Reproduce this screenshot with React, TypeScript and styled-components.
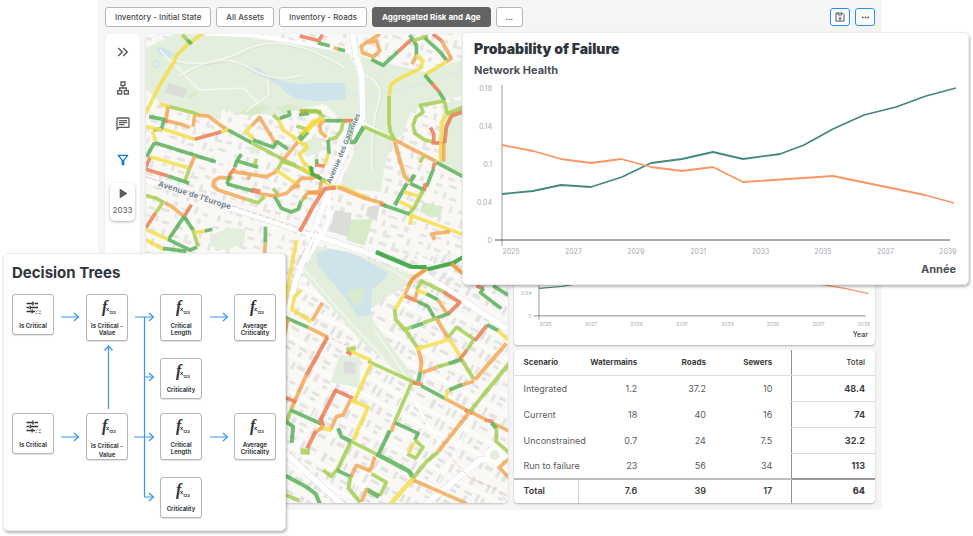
import React from "react";
import styled, { createGlobalStyle } from "styled-components";
import {
  MdKeyboardDoubleArrowRight,
  MdOutlineChat,
  MdOutlineFilterAlt,
  MdOutlineLan,
  MdPlayArrow,
  MdMoreHoriz,
} from "react-icons/md";

const GlobalStyle = createGlobalStyle`
  *, *::before, *::after { box-sizing: border-box; }
  body { margin: 0; background: #fff; font-family: Inter, "Liberation Sans", sans-serif; color: #3a3d42; }
  button { font-family: inherit; cursor: pointer; }
`;

const Stage = styled.div`
  position: relative;
  min-height: 100vh;
  overflow: hidden;
`;

const Dashboard = styled.main`
  margin: 0 91px 0 98px;
  padding: 7px;
  background: #f5f5f5;
`;

const Toolbar = styled.header`
  display: flex;
  align-items: center;
  justify-content: space-between;
  height: 20px;
  margin-bottom: 7px;
`;

const Tabs = styled.nav`
  display: flex;
  gap: 5px;
`;

const Tab = styled.button<{ $active?: boolean }>`
  height: 20px;
  padding: 0 9px;
  border: 1px solid ${(p) => (p.$active ? "#636363" : "#b5b5b5")};
  border-radius: 3px;
  background: ${(p) => (p.$active ? "#636363" : "#fff")};
  color: ${(p) => (p.$active ? "#fff" : "#4a4a4a")};
  font-size: 8px;
  font-weight: ${(p) => (p.$active ? 700 : 500)};
  line-height: 16px;
  white-space: nowrap;
`;

const Actions = styled.div`
  display: flex;
  gap: 5px;
`;

const ActionButton = styled.button`
  display: grid;
  place-items: center;
  width: 20px;
  height: 18px;
  padding: 0;
  border: 1px solid #2491fb;
  border-radius: 3px;
  background: #fff;
  color: #555;
`;

const Workspace = styled.div`
  display: grid;
  grid-template-columns: 35px minmax(0, 1fr) minmax(0, 1fr);
  gap: 6px;
`;

const Sidebar = styled.aside`
  display: flex;
  flex-direction: column;
  align-items: center;
  gap: 16px;
  padding-top: 8px;
  border-radius: 5px;
  background: #fff;
  box-shadow: 0 1px 2px rgba(0, 0, 0, 0.1);
`;

const SideButton = styled.button<{ $active?: boolean }>`
  display: grid;
  place-items: center;
  width: 24px;
  height: 20px;
  padding: 0;
  border: 0;
  background: none;
  color: ${(p) => (p.$active ? "#0b78e3" : "#5c5c5c")};
`;

const PlayButton = styled.button`
  display: flex;
  flex-direction: column;
  align-items: center;
  gap: 2px;
  width: 25px;
  height: 38px;
  margin-top: -3px;
  padding: 2px 0 0;
  border: 0;
  border-radius: 5px;
  background: #fff;
  box-shadow: 0 1px 3px rgba(0, 0, 0, 0.3);
  color: #5c5c5c;
  font-size: 8px;
  line-height: 12px;
`;

const MapFrame = styled.section`
  height: 469px;
  overflow: hidden;
  border-radius: 5px;
  box-shadow: 0 1px 2px rgba(0, 0, 0, 0.2);
`;

const MapCanvas = styled.svg`
  display: block;
  width: 100%;
  height: 100%;
`;

const MapLabel = styled.text`
  font-family: "Noto Sans", sans-serif;
  font-weight: 700;
  fill: #71838f;
  stroke: #fff;
  stroke-width: 1px;
  paint-order: stroke;
`;

const Column = styled.div`
  display: flex;
  flex-direction: column;
  justify-content: space-between;
`;

const Panel = styled.section`
  border-radius: 4px;
  background: #fff;
  box-shadow: 0 1px 2px rgba(0, 0, 0, 0.28);
`;

const ChartPanel = styled(Panel)`
  display: flex;
  flex-direction: column;
  justify-content: flex-end;
  height: 311px;
  padding-bottom: 4px;
`;

const ChartSvg = styled.svg`
  display: block;
  width: 100%;
  height: auto;
  overflow: visible;
`;

const AxisText = styled.text`
  font-family: Inter, sans-serif;
  fill: #a4a8b2;
`;

const AxisTitle = styled.div<{ $small?: boolean }>`
  padding-right: ${(p) => (p.$small ? 7 : 12)}px;
  text-align: right;
  font-size: ${(p) => (p.$small ? 7 : 11)}px;
  line-height: ${(p) => (p.$small ? 12 : 20)}px;
  font-weight: ${(p) => (p.$small ? 600 : 700)};
  color: #4b4f58;
`;

const Table = styled.table`
  width: 100%;
  table-layout: fixed;
  border-collapse: collapse;
  font-size: 9px;
  color: #5a5a5a;
`;

const Cell = styled.td<{ $total?: boolean; $sewers?: boolean }>`
  height: 26px;
  padding: 0 ${(p) => (p.$sewers ? 19 : 10)}px 0 0;
  text-align: right;
  font-weight: ${(p) => (p.$total ? 700 : 400)};
  color: ${(p) => (p.$total ? "#3c3c3c" : "#5a5a5a")};
  border-left: ${(p) => (p.$total ? "1px solid #8f8f8f" : "0")};
  border-bottom: ${(p) => (p.$total ? "1px solid #dcdcdc" : "0")};
`;

const HeadCell = styled.th<{ $first?: boolean; $sewers?: boolean; $total?: boolean }>`
  height: 25px;
  padding: ${(p) => (p.$first ? "0 0 0 10px" : p.$sewers ? "0 19px 0 0" : "0 10px 0 0")};
  text-align: ${(p) => (p.$first ? "left" : "right")};
  font-size: 8px;
  font-weight: ${(p) => (p.$total ? 500 : 700)};
  color: #3c3c3c;
  border-bottom: 1px solid #dcdcdc;
  border-left: ${(p) => (p.$total ? "1px solid #8f8f8f" : "0")};
`;

const RowHead = styled.th`
  padding: 0 0 0 10px;
  text-align: left;
  font-weight: 400;
  white-space: nowrap;
`;

const FootCell = styled.td<{ $sewers?: boolean; $total?: boolean }>`
  height: 24px;
  padding: 0 ${(p) => (p.$sewers ? 19 : 10)}px 2px 0;
  text-align: right;
  font-weight: ${(p) => (p.$total ? 800 : 600)};
  color: #3c3c3c;
  border-top: 2px solid ${(p) => (p.$total ? "#999" : "#bdbdbd")};
  border-left: ${(p) => (p.$total ? "1px solid #8f8f8f" : "0")};
`;

const FootHead = styled.th`
  padding: 0 0 2px 10px;
  text-align: left;
  font-weight: 600;
  color: #3c3c3c;
  border-top: 2px solid #bdbdbd;
  border-right: 1px solid #d0d0d0;
`;

const FloatingCard = styled.section`
  position: absolute;
  border: 1px solid #e9ebee;
  border-radius: 5px;
  background: #fff;
  box-shadow: 1px 2px 3px rgba(0, 0, 0, 0.28);
`;

const FailureCard = styled(FloatingCard)`
  top: 32px;
  left: 462px;
  right: 4px;
  padding: 6px 0 5px;
`;

const TreeCard = styled(FloatingCard)`
  top: 253px;
  left: 3px;
  width: 283px;
  padding: 9px 8px 13px;
`;

const CardTitle = styled.h2<{ $inset?: boolean }>`
  margin: 0;
  padding-left: ${(p) => (p.$inset ? 11 : 0)}px;
  font-size: ${(p) => (p.$inset ? 14 : 15)}px;
  line-height: 20px;
  font-weight: ${(p) => (p.$inset ? 900 : 700)};
  color: #30353d;
`;

const CardSubtitle = styled.h3`
  margin: 3px 0 0;
  padding-left: 11px;
  font-size: 11px;
  line-height: 16px;
  font-weight: 700;
  color: #4b4f58;
`;

const Tree = styled.div`
  position: relative;
  display: grid;
  grid-template-columns: repeat(4, 42px);
  grid-template-rows: 64px 55px 64px 40px;
  column-gap: 32px;
  align-items: start;
  margin-top: 11px;
`;

const Links = styled.svg`
  position: absolute;
  inset: 0;
  width: 266px;
  height: 223px;
  fill: none;
  stroke: #3395f5;
  stroke-width: 1.2;
`;

const Node = styled.article<{ $col: number; $row: number; $tall?: boolean }>`
  grid-column: ${(p) => p.$col};
  grid-row: ${(p) => p.$row};
  display: flex;
  flex-direction: column;
  align-items: center;
  gap: 3px;
  width: 42px;
  height: ${(p) => (p.$tall ? 47 : 41)}px;
  padding-top: 4px;
  border: 1px solid #b3b5bc;
  border-radius: 3px;
  background: #fff;
  box-shadow: 0 1px 1px rgba(0, 0, 0, 0.12);
`;

const NodeLabel = styled.div<{ $loose?: boolean }>`
  font-size: 6px;
  line-height: ${(p) => (p.$loose ? 9 : 7)}px;
  font-weight: 700;
  text-align: center;
  color: #3a3d44;
`;

const Glyph = styled.svg`
  display: block;
  flex: none;
  overflow: visible;
`;

const FxGlyph = styled.text`
  font-family: "Liberation Serif", serif;
  font-style: italic;
  font-weight: 700;
  fill: #2f333b;
`;

const GlyphText = styled.text`
  font-family: Inter, sans-serif;
  font-weight: 700;
  fill: #3a3d44;
`;

const G = "#3da53f";
const L = "#98c637";
const Y = "#f5d92c";
const O = "#f29a3c";
const R = "#e8683a";

type Road = [string, string, number?];

const northWest: Road[] = [
  [Y, "18,250 60,165 105,92 108,78 150,38 190,10"], [L, "128,14 150,38"], [G, "143,30 156,42"],
  [Y, "60,223 90,230"], [L, "90,230 160,248 178,256"], [O, "175,256 205,258 265,302"],
  [O, "85,230 78,272 125,283 150,293"], [O, "165,255 160,290"], [R, "72,268 84,276"],
  [G, "28,260 72,268 66,296 40,300"], [Y, "18,290 66,300"], [Y, "72,298 165,328"],
  [R, "165,328 245,305"], [Y, "245,305 268,298"], [G, "265,300 335,338"],
  [L, "335,338 430,388 510,430"], [G, "510,430 560,455"], [Y, "38,303 48,335"],
  [G, "20,380 42,342 50,340 228,395"], [R, "18,412 32,380"], [Y, "32,380 148,414"],
  [O, "165,378 150,414"], [L, "150,414 135,455"], [R, "18,418 85,438"], [G, "85,438 148,460"],
  [L, "18,497 50,505 72,518"], [O, "75,518 100,532 133,560"], [R, "133,560 155,524"],
  [G, "133,560 85,630"], [R, "18,594 48,548"], [L, "48,548 68,520"], [Y, "18,598 85,628"],
  [G, "85,628 150,660 172,652"], [G, "133,560 160,600"], [L, "160,600 175,650"],
  [Y, "165,608 195,603"], [G, "195,603 218,598"], [Y, "18,630 75,660"], [G, "70,655 140,664"],
  [G, "377,590 377,638"], [O, "377,638 374,670"],
  [O, "278,445 240,442 222,452 220,468 235,480 320,508"], [L, "320,508 355,518 375,500"],
  [O, "360,492 410,498"], [G, "262,462 340,483"], [R, "335,480 362,486", 15], [G, "262,462 270,436"],
  [R, "268,436 285,415"], [G, "285,412 290,395 305,372"], [G, "290,392 355,412"],
  [L, "345,405 350,386"], [O, "280,425 380,440 410,425"], [L, "410,425 430,390"],
  [O, "430,390 475,335"], [G, "478,330 503,302", 18], [Y, "500,305 520,282 545,268", 14],
  [O, "325,448 332,430"], [Y, "410,420 470,462"], [Y, "345,330 318,305 335,288"],
  [O, "335,288 360,262 410,345"], [G, "340,330 400,352 412,335 445,358"], [L, "400,255 420,272"],
  [Y, "418,270 430,300 475,330"], [G, "420,265 450,255 447,242"], [G, "478,255 508,250"],
  [R, "482,246 505,242"], [L, "505,246 545,245"], [L, "470,288 500,298"],
  [Y, "475,335 500,345 500,355 478,372 490,395 515,420"], [G, "512,408 515,432"],
  [L, "430,395 470,408"], [O, "470,460 485,445 515,445 540,435"], [O, "452,475 480,465", 13],
  [L, "400,475 415,495"], [G, "405,500 425,535 455,546 475,538 485,512"], [L, "485,512 500,500"],
  [O, "410,498 440,490 470,462"], [O, "490,505 505,488 540,490"],
];

const northEast: Road[] = [
  [O, "240,12 185,48 188,68 222,80 240,62 230,32 205,38"], [G, "215,88 250,106 295,65"],
  [R, "295,65 335,28"], [G, "330,15 350,45 350,75"], [O, "350,75 337,103"], [L, "340,32 385,18"],
  [G, "375,24 420,65 440,90"], [R, "400,12 425,32"], [O, "425,32 455,85 440,95"], [Y, "440,95 375,135"],
  [Y, "350,75 370,92 362,115 300,145 275,162 268,195"], [L, "268,197 268,280 272,305 285,330"],
  [G, "375,135 398,162"], [R, "396,160 418,185"], [G, "418,185 435,213"],
  [L, "435,213 362,226 370,246 348,262 340,285 345,310 375,330 398,335"], [R, "395,338 435,340"],
  [R, "402,338 402,312 392,292"], [L, "435,215 442,250"], [L, "440,252 490,232"],
  [Y, "440,254 425,278 422,395"], [R, "490,245 455,258 440,290 434,340", 12], [O, "432,340 432,395"],
  [G, "150,336 165,336 192,290", 13], [L, "192,290 285,330"], [O, "285,330 410,395"], [G, "410,397 490,440"],
  [O, "285,335 300,390 315,440 330,455", 12], [G, "322,460 285,525", 12], [L, "372,378 360,398"],
  [R, "405,398 400,415"], [G, "402,415 380,470"], [R, "378,460 372,482", 13], [L, "370,480 345,530 330,550", 12],
  [G, "345,434 332,455", 13], [G, "330,460 370,478"], [Y, "312,485 355,498"], [Y, "300,515 335,532"],
  [Y, "337,550 330,585"], [Y, "65,450 100,470 130,472 210,508"], [O, "115,472 190,503 250,520"],
  [R, "240,522 260,528"], [G, "250,525 330,553"], [Y, "330,555 490,614"], [O, "450,605 395,612 405,630"],
  [G, "228,665 335,710 380,712", 12], [G, "380,718 455,700 490,682"], [O, "455,702 490,732"],
  [O, "380,718 345,740 325,768"], [R, "108,473 75,476 40,530 0,605", 12],
  [L, "0,242 50,242 75,262"], [G, "75,272 130,272"], [R, "130,272 160,272"], [G, "158,282 145,330", 18],
  [L, "130,275 125,300 110,322 85,330"], [G, "85,330 88,372"], [Y, "85,372 75,405"],
  [O, "75,270 60,285 62,305 80,322"], [Y, "70,266 40,275 5,315", 13], [R, "45,405 75,408"],
  [G, "50,388 52,402"], [Y, "0,412 35,430"], [G, "35,412 38,432 65,446"], [O, "65,452 60,485 25,488"],
  [R, "0,18 58,32 68,14"], [G, "55,38 90,48"], [O, "102,53 118,58"], [G, "115,57 136,62"],
];

const south: Road[] = [
  [Y, "50,0 18,180"], [Y, "65,150 45,168 36,208 95,245"], [O, "97,242 128,188"], [G, "18,233 85,262"],
  [O, "85,262 145,292"], [R, "143,292 80,405", 12], [O, "80,405 35,505", 12], [R, "14,472 50,486"],
  [L, "35,505 22,545"], [O, "14,290 24,235"], [L, "200,330 228,324", 14], [R, "200,336 216,342"],
  [Y, "215,335 275,362"], [L, "265,364 410,430"], [R, "398,428 428,434"], [G, "425,438 495,475"],
  [O, "495,475 560,510 620,540"], [R, "555,510 578,520"], [R, "615,540 640,545"], [O, "635,548 690,574"],
  [Y, "275,370 225,480"], [L, "395,430 345,545"], [O, "345,545 335,575"], [G, "330,572 298,640", 12],
  [R, "165,450 220,475"], [R, "168,450 122,540", 12], [O, "213,478 190,525 170,530 152,570"],
  [Y, "215,480 265,502 220,600", 12], [L, "212,608 172,692", 12], [G, "32,510 125,552", 12],
  [R, "122,535 130,560", 14], [Y, "120,562 155,570", 14], [G, "175,565 185,590 215,605", 12],
  [L, "215,605 295,645"], [G, "290,642 388,694 402,715", 14], [O, "400,720 560,790"],
  [Y, "400,715 330,795", 14], [L, "400,715 440,665 475,636", 12], [O, "475,635 570,515", 12],
  [L, "570,515 690,368", 12], [O, "130,560 105,578"], [R, "108,574 82,625", 12], [L, "62,634 90,636", 18],
  [G, "18,545 40,560 36,608", 12], [G, "345,548 415,580 405,600"], [L, "405,600 430,622 408,655 382,642"],
  [Y, "402,608 388,640"], [O, "285,650 275,685 262,692", 12], [O, "275,694 230,676 212,712"],
  [G, "170,690 212,710"], [L, "130,690 155,710 170,690"], [L, "212,710 206,745 242,788", 12],
  [L, "275,702 320,727 300,768"], [G, "260,748 298,770", 14], [O, "245,785 262,745"],
  [G, "14,706 75,738 108,762 122,795", 12], [L, "18,765 58,782", 12],
  [G, "290,38 390,80 440,82", 12], [G, "445,88 520,70 548,52", 12], [O, "515,70 550,102"],
  [O, "435,90 395,120 375,165"], [Y, "372,165 345,210"], [L, "345,208 348,240 378,272 415,325", 12],
  [O, "415,325 425,365 422,395", 12], [G, "422,395 415,425", 12], [R, "375,168 415,185"],
  [G, "415,185 445,200 465,235"], [O, "405,178 415,148"], [L, "412,148 425,123 490,155"],
  [R, "490,155 540,187 505,222", 12], [G, "508,220 470,235"], [Y, "412,150 440,162"],
  [G, "440,162 475,180"], [O, "475,180 500,218"], [L, "370,270 395,262"], [G, "395,262 430,250", 12],
  [L, "430,248 470,235"], [O, "470,235 505,295", 12], [Y, "410,328 510,298"], [Y, "510,298 545,355"],
  [L, "545,358 582,418", 12], [O, "428,398 470,382", 12], [L, "470,382 510,370"], [G, "507,371 545,358", 12],
  [L, "505,292 530,262 583,298"], [L, "583,298 562,330"], [R, "562,330 540,358"], [R, "585,302 622,256", 12],
  [G, "622,254 655,272"], [Y, "655,272 684,300"], [O, "680,310 585,420", 12], [O, "583,424 545,435"],
  [G, "547,434 508,450", 12], [Y, "505,448 498,475"], [R, "590,138 612,146"], [G, "612,145 602,158 665,206"],
  [G, "640,138 690,168"], [G, "635,548 650,565", 12], [L, "650,565 650,605 690,640"], [O, "690,655 658,682 690,715"],
];

function RoadLayer({ roads, origin }: { roads: Road[]; origin: [number, number] }) {
  return (
    <g transform={`translate(${origin[0]} ${origin[1]}) scale(0.3333)`} fill="none" strokeLinejoin="round" opacity={0.8}>
      {roads.map(([color, points, width], i) => (
        <polyline key={i} points={points} stroke={color} strokeWidth={width ?? 11} strokeOpacity={0.9} />
      ))}
    </g>
  );
}

function CityMap() {
  return (
    <MapCanvas viewBox="146 34 362 469" preserveAspectRatio="xMidYMid slice" role="img" aria-label="Road network map">
      <defs>
        <pattern id="blocks" width="67" height="53" patternUnits="userSpaceOnUse" patternTransform="rotate(17)">
          <path d="M2 2h5v3h-5zM12 1h3v6h-3zM19 4h7v3h-7zM33 2h3v3h5v3h-8zM47 1h6v3h-6zM58 3h3v7h-3zM3 13h3v7h-3zM10 15h6v2h-6zM22 12h3v7h-3zM31 14h8v3h-8zM45 11h3v5h5v3h-8zM57 15h6v3h-6zM1 26h8v3h-8zM14 24h3v7h-3zM21 28h6v3h-6zM36 23h3v8h-3zM43 27h4v3h-4zM51 24h9v3h-9zM4 36h3v6h-3zM12 38h7v3h-7zM25 35h4v5h-4zM33 39h9v2h-9zM47 34h3v7h-3zM56 38h5v3h-5zM2 47h6v3h-6zM15 45h8v3h-8zM29 46h3v5h-3zM38 47h7v3h-7zM52 45h4v5h-4z" fill="#e6e5e4" />
        </pattern>
        <pattern id="blocksTilted" width="71" height="49" patternUnits="userSpaceOnUse" patternTransform="rotate(28)">
          <path d="M2 2h4v9h-4zM9 3h6v3h-6zM20 2h3v8h-3zM26 1h3v8h-3zM34 2h8v3h-8zM35 8h5v3h-5zM49 1h3v9h-3zM56 3h9v3h-9zM2 18h8v3h-8zM4 23h3v5h-3zM15 16h3v9h-3zM21 17h3v9h-3zM29 18h8v3h-8zM31 24h4v3h-4zM43 16h5v9h-5zM53 18h3v7h-3zM60 17h7v3h-7zM60 23h6v3h-6zM3 34h3v8h-3zM9 35h8v4h-8zM22 33h3v9h-3zM29 34h4v8h-4zM38 35h9v3h-9zM40 41h6v3h-6zM52 33h3v9h-3zM59 36h8v4h-8z" fill="#e4e3e3" />
          <path d="M0 13.500h71M0 30h71M46 0v49" stroke="#fff" strokeWidth="1.3" />
        </pattern>
      </defs>
      <rect x="146" y="34" width="362" height="469" fill="#f9f8f6" />
      <path d="M146 100H420V285H146z" fill="url(#blocks)" />
      <path d="M320 34H508V285H320z" fill="url(#blocks)" />
      <path d="M146 34H345V70H146z" fill="url(#blocks)" />
      <path d="M146 255H508V503H146z" fill="url(#blocksTilted)" />

      {/* parks */}
      <g fill="#e3efdc">
        <path d="M146 48L175 34H205L245 37L300 44L349 52L358 75L360 118L346 124L325 104L303 108L280 115L240 114L222 109L221 118L208 117L160 104L152 94L146 90z" />
        <path d="M361 56L385 63L425 72L462 60V96L442 100L420 106L408 118L404 134L394 140L385 165L381 192L340 187L365 128z" />
        <path d="M443 103L462 100V175L440 163z" />
        <path d="M303 274L316 246L350 252L408 273L415 281L389 296L371 309L373 320L418 383L412 385L360 340z" />
        <path d="M340 355L360 357V388L331 382z" />
        <path d="M210 236L228 228L246 229L245 243L225 250L210 246z" />
        <path d="M300 143L320 137L324 150L306 157z" />
        <path d="M247 148L256 145L262 151L252 154z" />
      </g>
      <path d="M412 113L420 106L436 104L442 118L441 138L425 140L414 132z" fill="#f9f8f6" />
      <path d="M412 113L420 106L436 104L442 118L441 138L425 140L414 132z" fill="url(#blocks)" />
      <g fill="#d7ebc9">
        <path d="M238 113L262 103L272 108L252 116z" />
        <path d="M350 220L373 219L365 246L347 240z" />
        <path d="M423 202L443 207L440 218L420 212z" />
        <path d="M187 96L196 91L198 93L190 99z" />
        <path d="M275 108L290 104L300 108L284 113z" />
      </g>
      <g fill="#cfe4ea">
        <path d="M245 67L258 68L272 77L286 82L300 84L318 83L345 83L346 99L325 101L314 101L298 99L286 93L280 86L263 77z" />
        <path d="M156 47L165 48L174 54L172 58L160 55z" />
        <path d="M316 253L330 249L352 253L388 272L386 278L372 290L371 315L358 316L347 300L318 265z" />
      </g>
      <circle cx="157" cy="64" r="3" fill="none" stroke="#cfe4ea" strokeWidth="1.5" />
      <path d="M346 93L367 97L417 85L462 71M196 64L215 66" stroke="#d5e9ef" strokeWidth="1.2" fill="none" />
      <path d="M350 291L365 287L364 298L358 307L348 296z" fill="#d9ebca" />
      <path d="M169 83L188 89L184 98L165 93zM335 210L352 213L348 237L330 231zM368 207L380 205L377 220L366 216zM344 361L356 363L356 374L344 373z" fill="#dddddb" />

      {/* footpaths */}
      <g fill="none" stroke="#f7f7f2" strokeWidth="1.4">
        <path d="M175 60Q205 70 245 50T345 68M180 76Q220 50 248 67T300 75M268 78L269 95L246 112M160 50L200 90L244 88L260 105M366 75Q385 82 378 105T372 170" />
        <path d="M305 270L350 322L390 365M375 330L412 385M388 268L460 310" />
      </g>
      <g fill="none" stroke="#d2d2c8" strokeWidth="0.5" strokeDasharray="2 1">
        <path d="M175 62Q205 72 245 52T345 70M180 78Q220 52 248 69T300 77M270 78L271 95L248 112M368 75Q387 82 380 105T374 170" />
      </g>

      {/* main roads */}
      <g fill="none" stroke="#e2e2e2" strokeWidth="6.5">
        <path d="M146 180L320 237L365 252L425 275L508 330" />
        <path d="M353 34L356 55L362 75L363 117L340 165L320 215L298 275L286 315" />
        <path d="M280 448L346 508M508 457L480 460L424 506" />
      </g>
      <g fill="none" stroke="#fff" strokeWidth="5.5">
        <path d="M146 180L320 237L365 252L425 275L508 330" />
        <path d="M353 34L356 55L362 75L363 117L340 165L320 215L298 275L286 315" />
        <path d="M280 448L346 508M508 457L480 460L424 506" />
        <path d="M205 34L260 36L350 52" strokeWidth="3" />
        <path d="M363 123L395 140M330 190L328 225L306 262" strokeWidth="3" />
        <circle cx="314" cy="234" r="7" strokeWidth="3" />
        <circle cx="495" cy="455" r="7" strokeWidth="4" fill="#e3efdc" />
        <path d="M410 390L425 420L445 450" strokeWidth="2" />
      </g>
      <path d="M146 177L310 232M316 230L295 268L287 305M325 335L350 347M444 450L470 478L498 490L508 503" stroke="#e5bcc2" strokeWidth="0.8" strokeDasharray="5 2" fill="none" />

      <RoadLayer roads={northWest} origin={[140, 30]} />
      <RoadLayer roads={northEast} origin={[300, 30]} />
      <RoadLayer roads={south} origin={[280, 240]} />

      <MapLabel fontSize="8" transform="translate(158 186) rotate(18)">Avenue de l’Europe</MapLabel>
      <MapLabel fontSize="7" transform="translate(331 184) rotate(-67)">Avenue des Garennes</MapLabel>
    </MapCanvas>
  );
}

/* Each sample is [distance along the axis, height above the axis]. */
const rising = [[0, 46], [31, 49], [59, 55], [89, 53], [120, 63], [149, 77], [180, 81], [211, 88], [241, 81], [278, 86], [302, 95], [331, 111], [362, 125], [394, 133], [424, 144], [454, 152]];
const falling = [[0, 95], [31, 89], [59, 81], [89, 77], [119, 81], [149, 73], [180, 69], [211, 73], [241, 58], [331, 64], [423, 45], [452, 37]];
const years = ["2025", "2027", "2029", "2031", "2033", "2035", "2037", "2039"];
const levels = ["0", "0.04", "0.1", "0.14", "0.18"];

interface ChartProps {
  width: number;
  height: number;
  left: number;
  base: number;
  sx: number;
  sy: number;
  font: number;
  line: number;
}

function TrendChart({ width, height, left, base, sx, sy, font, line }: ChartProps) {
  const trace = (points: number[][]) => points.map(([x, y]) => `${left + x * sx},${base - y * sy}`).join(" ");
  return (
    <ChartSvg viewBox={`0 0 ${width} ${height}`} role="img" aria-label="Probability of failure by year">
      <path d={`M${left} ${base - 155 * sy}V${base + 6 * sy}`} stroke="#a9a9b0" strokeWidth={1.2} />
      <path d={`M${left - 7 * sx} ${base}H${left + 448 * sx}`} stroke="#54525c" strokeWidth={line / 1.8} />
      {levels.map((t, i) => (
        <AxisText key={t} fontSize={font} textAnchor="end" x={left - 10 * sx} y={base - i * 38 * sy + font * 0.36}>{t}</AxisText>
      ))}
      {years.map((t, i) => (
        <AxisText key={t} fontSize={font} textAnchor="middle" x={left + (9 + i * 62.4) * sx} y={base + 14 * sx}>{t}</AxisText>
      ))}
      <g fill="none" strokeWidth={line} strokeLinejoin="round">
        <polyline points={trace(rising)} stroke="#43897f" />
        <polyline points={trace(falling)} stroke="#fb9564" />
      </g>
    </ChartSvg>
  );
}

const scenarios = [
  ["Integrated", "1.2", "37.2", "10", "48.4"],
  ["Current", "18", "40", "16", "74"],
  ["Unconstrained", "0.7", "24", "7.5", "32.2"],
  ["Run to failure", "23", "56", "34", "113"],
];

function ScenarioTable() {
  return (
    <Table>
      <colgroup>
        <col width="18%" />
        <col width="19%" />
        <col width="19%" />
        <col width="21%" />
        <col width="23%" />
      </colgroup>
      <thead>
        <tr>
          <HeadCell scope="col" $first>Scenario</HeadCell>
          <HeadCell scope="col">Watermains</HeadCell>
          <HeadCell scope="col">Roads</HeadCell>
          <HeadCell scope="col" $sewers>Sewers</HeadCell>
          <HeadCell scope="col" $total>Total</HeadCell>
        </tr>
      </thead>
      <tbody>
        {scenarios.map(([name, water, roads, sewers, total]) => (
          <tr key={name}>
            <RowHead scope="row">{name}</RowHead>
            <Cell>{water}</Cell>
            <Cell>{roads}</Cell>
            <Cell $sewers>{sewers}</Cell>
            <Cell $total>{total}</Cell>
          </tr>
        ))}
      </tbody>
      <tfoot>
        <tr>
          <FootHead scope="row">Total</FootHead>
          <FootCell>7.6</FootCell>
          <FootCell>39</FootCell>
          <FootCell $sewers>17</FootCell>
          <FootCell $total>64</FootCell>
        </tr>
      </tfoot>
    </Table>
  );
}

function FxIcon() {
  return (
    <Glyph width="20" height="20" viewBox="0 0 20 20" aria-hidden="true">
      <FxGlyph x="5" y="13" fontSize="16">f</FxGlyph>
      <path d="M9.500 9l2.200 3M11.700 9L9.500 12" stroke="#2f333b" strokeWidth="0.9" />
      <GlyphText x="12" y="15" fontSize="4">123</GlyphText>
    </Glyph>
  );
}

function TuneIcon() {
  return (
    <Glyph width="20" height="20" viewBox="0 0 20 20" aria-hidden="true" fill="none" stroke="#2f333b" strokeWidth="1.3">
      <path d="M3.500 4.500h6M11.500 4.500h3.500M10 2.500v4M3.500 8.500h2.500M7.500 8.500h7.500M7.200 6.700v3.600M3.500 12.500h5M9.200 10.500v4" />
      <path d="M10 12.500h2" />
      <path d="M12.500 11.600l1 1 1-1M15.500 12h2.500M12.500 14.600h1.600M15.500 14.600h2.500" strokeWidth="0.6" />
    </Glyph>
  );
}

interface TreeNode {
  col: number;
  row: number;
  label: string[];
  tune?: boolean;
  loose?: boolean;
}

const nodes: TreeNode[] = [
  { col: 1, row: 1, label: ["Is Critical"], tune: true },
  { col: 2, row: 1, label: ["Is Critical -", "Value"] },
  { col: 3, row: 1, label: ["Critical", "Length"] },
  { col: 4, row: 1, label: ["Average", "Criticality"] },
  { col: 3, row: 2, label: ["Criticality"] },
  { col: 1, row: 3, label: ["Is Critical"], tune: true },
  { col: 2, row: 3, label: ["Is Critical -", "Value"], loose: true },
  { col: 3, row: 3, label: ["Critical", "Length"] },
  { col: 4, row: 3, label: ["Average", "Criticality"] },
  { col: 3, row: 4, label: ["Criticality"] },
];

function DecisionTree() {
  return (
    <Tree>
      <Links viewBox="0 0 266 223" aria-hidden="true">
        <path d="M49 23h17M123 23h18M198 23h17M49 143h17M122 143h19M198 143h17" />
        <path d="M132.500 23v180h8.500M132.500 83h8.500M96.500 115V53" />
        <path d="M62 19l4.500 4-4.500 4M62 139l4.500 4-4.500 4M211 19l4.500 4-4.500 4M211 139l4.500 4-4.500 4M137 19l4.500 4-4.500 4M137 79l4.500 4-4.500 4M137 139l4.500 4-4.500 4M137 199l4.500 4-4.500 4M92.500 56.500l4-4.500 4 4.500" />
      </Links>
      {nodes.map((n) => (
        <Node key={`${n.col}-${n.row}`} $col={n.col} $row={n.row} $tall={n.label.length > 1}>
          {n.tune ? <TuneIcon /> : <FxIcon />}
          <NodeLabel $loose={n.loose}>
            {n.label.map((line) => (
              <div key={line}>{line}</div>
            ))}
          </NodeLabel>
        </Node>
      ))}
    </Tree>
  );
}

export default function App() {
  return (
    <Stage>
      <GlobalStyle />
      <Dashboard>
        <Toolbar>
          <Tabs aria-label="Views">
            <Tab>Inventory - Initial State</Tab>
            <Tab>All Assets</Tab>
            <Tab>Inventory - Roads</Tab>
            <Tab $active aria-current="page">Aggregated Risk and Age</Tab>
            <Tab aria-label="More views">...</Tab>
          </Tabs>
          <Actions>
            <ActionButton aria-label="Save">
              <svg width="10" height="10" viewBox="0 0 10 10" fill="none" stroke="#555" strokeWidth="1">
                <path d="M1 1h6.500l1.500 1.500v6.500h-8zM3 1v2h3.500V1M5 4.500v3M3.500 6.200L5 7.700l1.500-1.500" />
              </svg>
            </ActionButton>
            <ActionButton aria-label="More actions"><MdMoreHoriz size={11} /></ActionButton>
          </Actions>
        </Toolbar>
        <Workspace>
          <Sidebar>
            <SideButton aria-label="Expand"><MdKeyboardDoubleArrowRight size={18} /></SideButton>
            <SideButton aria-label="Hierarchy"><MdOutlineLan size={16} /></SideButton>
            <SideButton aria-label="Comments"><MdOutlineChat size={16} /></SideButton>
            <SideButton aria-label="Filter" $active><MdOutlineFilterAlt size={16} /></SideButton>
            <PlayButton>
              <MdPlayArrow size={17} />
              2033
            </PlayButton>
          </Sidebar>
          <MapFrame><CityMap /></MapFrame>
          <Column>
            <ChartPanel>
              <TrendChart width={362} height={120} left={25} base={107} sx={0.73} sy={0.6} font={5} line={1.2} />
              <AxisTitle $small>Year</AxisTitle>
            </ChartPanel>
            <Panel><ScenarioTable /></Panel>
          </Column>
        </Workspace>
      </Dashboard>

      <FailureCard>
        <CardTitle $inset>Probability of Failure</CardTitle>
        <CardSubtitle>Network Health</CardSubtitle>
        <TrendChart width={505} height={181} left={39} base={162} sx={1} sy={1} font={7} line={1.8} />
        <AxisTitle>Année</AxisTitle>
      </FailureCard>

      <TreeCard>
        <CardTitle>Decision Trees</CardTitle>
        <DecisionTree />
      </TreeCard>
    </Stage>
  );
}
